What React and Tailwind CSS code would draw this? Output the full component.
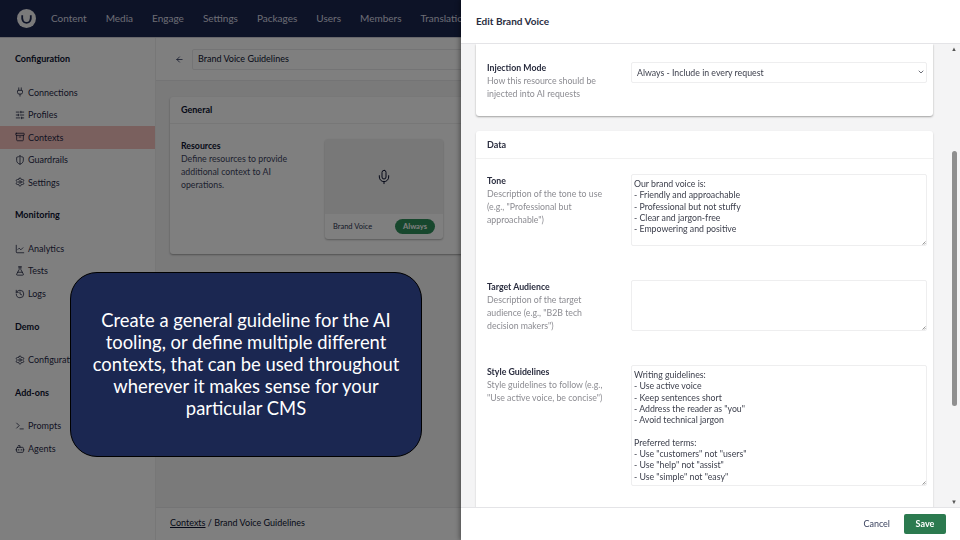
import { ArrowLeft, Archive, Bot, ChartLine, ChevronDown, FlaskConical, History, Mic, Plug, Settings, ShieldHalf, SlidersHorizontal, Terminal } from 'lucide-react'

const nav = ['Content', 'Media', 'Engage', 'Settings', 'Packages', 'Users', 'Members', 'Translation']

const groups = [
  {
    title: 'Configuration',
    items: [
      { icon: Plug, label: 'Connections' },
      { icon: SlidersHorizontal, label: 'Profiles' },
      { icon: Archive, label: 'Contexts', active: true },
      { icon: ShieldHalf, label: 'Guardrails' },
      { icon: Settings, label: 'Settings' },
    ],
  },
  {
    title: 'Monitoring',
    items: [
      { icon: ChartLine, label: 'Analytics' },
      { icon: FlaskConical, label: 'Tests' },
      { icon: History, label: 'Logs' },
    ],
  },
  { title: 'Demo', items: [{ icon: Settings, label: 'Configuration' }] },
  {
    title: 'Add-ons',
    items: [
      { icon: Terminal, label: 'Prompts' },
      { icon: Bot, label: 'Agents' },
    ],
  },
]

const tone = `Our brand voice is:
- Friendly and approachable
- Professional but not stuffy
- Clear and jargon-free
- Empowering and positive`

const style = `Writing guidelines:
- Use active voice
- Keep sentences short
- Address the reader as "you"
- Avoid technical jargon

Preferred terms:
- Use "customers" not "users"
- Use "help" not "assist"
- Use "simple" not "easy"`

function Sidebar() {
  return (
    <aside className="w-[155px] shrink-0 bg-white pt-[14px]">
      {groups.map((group) => (
        <div key={group.title} className="mb-[14.75px]">
          <h3 className="mb-[15px] h-[14px] pl-[15px] text-[9px] leading-[14px] font-bold text-[#0c1230]">{group.title}</h3>
          {group.items.map((item) => (
            <div
              key={item.label}
              className={`flex h-[22.5px] items-center gap-[3px] pl-[15px] text-[9px] text-[#1f2847] ${item.active ? 'bg-[#f5c1bc]' : ''}`}
            >
              <item.icon size={10} strokeWidth={1.75} className="shrink-0 text-[#0c1230]" />
              {item.label}
            </div>
          ))}
        </div>
      ))}
    </aside>
  )
}

function Main() {
  return (
    <main className="flex min-w-0 flex-1 flex-col border-l border-[#eeeeee] bg-[#f4f4f5]">
      <div className="flex h-[43px] shrink-0 items-center gap-[8px] border-b border-[#e9e9eb] bg-white pl-[19px]">
        <ArrowLeft size={9} className="shrink-0 text-[#1b264f]" />
        <div className="flex h-[21px] w-[700px] shrink-0 items-center rounded-[2px] border border-[#e9e9eb] px-[5px] text-[9px] text-[#0c1230]">
          Brand Voice Guidelines
        </div>
      </div>
      <div className="flex-1 px-[14px] pt-[16px]">
        <section className="h-[157px] w-[700px] rounded-[3px] bg-white shadow-[0_1px_2px_rgba(0,0,0,0.35)]">
          <h2 className="flex h-[27px] items-center border-b border-[#eeeeee] px-[11px] text-[9px] font-bold text-[#0c1230]">General</h2>
          <div className="flex pt-[15px] pl-[11px]">
            <div className="w-[144px] shrink-0 text-[8.75px] leading-[13px] text-[#3c4460]">
              <div className="font-bold text-[#0c1230]">Resources</div>
              <p className="w-[120px]">Define resources to provide additional context to AI operations.</p>
            </div>
            <div className="h-[100px] w-[118px] shrink-0 rounded-[3px] bg-white shadow-[0_1px_2px_rgba(0,0,0,0.3)]">
              <div className="flex h-[75px] items-center justify-center rounded-t-[3px] bg-[#f0f0f0]">
                <Mic size={16} strokeWidth={1.5} className="text-[#0c1230]" />
              </div>
              <div className="flex h-[25px] items-center justify-between px-[8px]">
                <span className="text-[7.5px] text-[#2c3450]">Brand Voice</span>
                <span className="rounded-full bg-[#2f8f5b] px-[8px] py-[2px] text-[7.5px] leading-[11px] font-bold text-white">Always</span>
              </div>
            </div>
          </div>
        </section>
      </div>
      <div className="flex h-[33px] shrink-0 items-center border-t border-[#e9e9eb] bg-white pb-[2px] pl-[14px] text-[9px] text-[#0c1230]">
        <span className="underline">Contexts</span>
        <span>&nbsp;/ Brand Voice Guidelines</span>
      </div>
    </main>
  )
}

function Field({ label, help, className = '', children }) {
  return (
    <div className={`flex ${className}`}>
      <div className="w-[144px] shrink-0 text-[8.75px] leading-[13px] text-[#8c8c92]">
        <div className="font-bold text-[#2a2d3f]">{label}</div>
        <p className="w-[120px]">{help}</p>
      </div>
      {children}
    </div>
  )
}

function Area({ value, height }) {
  return (
    <div className={`relative ${height} w-[296px]`}>
      <textarea
        readOnly
        value={value}
        className="block h-full w-full resize-none rounded-[2px] border border-[#eeeeef] px-[2px] pt-[3px] text-[8.75px] leading-[11.3px] text-[#3c3f4c]"
      />
      <svg width="4" height="4" viewBox="0 0 4 4" className="pointer-events-none absolute right-[1px] bottom-[1px]">
        <path d="M0.5 3.5 L3.5 0.5 M2.2 3.5 L3.5 2.2" stroke="#555555" strokeWidth="0.6" fill="none" />
      </svg>
    </div>
  )
}

function Drawer() {
  return (
    <div className="absolute top-0 right-0 bottom-0 flex w-[499px] flex-col bg-[#f4f4f5] shadow-[-2px_0_4px_rgba(0,0,0,0.3)] blur-[0.35px]">
      <header className="flex h-[44px] shrink-0 items-center border-b border-[#e4e4e7] bg-white pl-[15px] text-[10px] font-bold text-[#2a2d3f]">
        Edit Brand Voice
      </header>
      <div className="flex min-h-0 flex-1">
        <div className="min-w-0 flex-1 overflow-hidden px-[15px]">
          <section className="flex h-[72px] rounded-b-[3px] bg-white pt-[17px] pl-[11px] shadow-[0_1px_2px_rgba(0,0,0,0.35)]">
            <Field label="Injection Mode" help="How this resource should be injected into AI requests">
              <div className="relative mt-[1px] h-[21px] w-[296px]">
                <select className="block h-full w-full appearance-none rounded-[2px] border border-[#eeeeef] px-[5px] text-[8.75px] text-[#3c3f4c]">
                  <option>Always - Include in every request</option>
                </select>
                <ChevronDown size={8} strokeWidth={2.25} className="pointer-events-none absolute top-[6px] right-[2px] text-[#3c3f4c]" />
              </div>
            </Field>
          </section>
          <section className="mt-[15px] h-[420px] rounded-t-[3px] bg-white shadow-[0_1px_2px_rgba(0,0,0,0.2)]">
            <h2 className="flex h-[28px] items-center border-b border-[#f1f1f1] px-[11px] text-[9px] font-bold text-[#2a2d3f]">Data</h2>
            <div className="pt-[15px] pl-[11px]">
              <Field label="Tone" help='Description of the tone to use (e.g., "Professional but approachable")'>
                <Area value={tone} height="h-[72px]" />
              </Field>
              <Field className="mt-[34px]" label="Target Audience" help='Description of the target audience (e.g., "B2B tech decision makers")'>
                <Area value="" height="h-[51px]" />
              </Field>
              <Field className="mt-[33px]" label="Style Guidelines" help='Style guidelines to follow (e.g., "Use active voice, be concise")'>
                <Area value={style} height="h-[121px]" />
              </Field>
            </div>
          </section>
        </div>
        <div className="flex w-[12px] shrink-0 flex-col items-center justify-between py-[2px]">
          <span className="text-[6px] leading-[6px] text-[#555555]">▲</span>
          <div className="mt-[99px] mb-[93px] w-[5px] flex-1 rounded-full bg-[#8f8f8f]" />
          <span className="text-[6px] leading-[6px] text-[#555555]">▼</span>
        </div>
      </div>
      <footer className="flex h-[33px] shrink-0 items-center justify-end gap-[14px] border-t border-[#e4e4e7] bg-white pr-[14px] pb-[1px] text-[9px]">
        <span className="text-[#3c4460]">Cancel</span>
        <button className="h-[20px] w-[42px] rounded-[2px] bg-[#2b7a4f] font-bold text-white">Save</button>
      </footer>
    </div>
  )
}

export default function App() {
  return (
    <div className="relative h-[540px] w-[960px] overflow-hidden font-['Lato',sans-serif]">
      <div className="flex h-full flex-col">
        <nav className="flex h-[38px] shrink-0 items-center border-b border-[#d0d0d8] bg-[#1b264f] pl-[17px]">
          <svg width="19" height="19" viewBox="0 0 19 19" className="mr-[15px] shrink-0">
            <circle cx="9.5" cy="9.5" r="9.5" fill="#f4f4f5" />
            <path d="M5.2 6.2 C4.8 11 6 13.8 9.5 13.8 C13 13.8 14.2 11 13.8 6.2" fill="none" stroke="#1b264f" strokeWidth="1.8" />
          </svg>
          <div className="flex gap-[19px] text-[10px] whitespace-nowrap text-[#d8dae6]">
            {nav.map((item) => (
              <span key={item}>{item}</span>
            ))}
          </div>
        </nav>
        <div className="flex min-h-0 flex-1">
          <Sidebar />
          <Main />
        </div>
      </div>
      <div className="absolute inset-0 bg-black/50 backdrop-blur-[0.7px]" />
      <Drawer />
      <div className="absolute top-[272px] left-[70px] flex h-[185px] w-[352px] items-center justify-center rounded-[27px] border border-black bg-[#1b2751] px-[20px] pb-[1px] text-center text-[18.4px] leading-[22px] text-white">
        Create a general guideline for the AI tooling, or define multiple different contexts, that can be used throughout wherever it makes sense for your particular CMS
      </div>
    </div>
  )
}
